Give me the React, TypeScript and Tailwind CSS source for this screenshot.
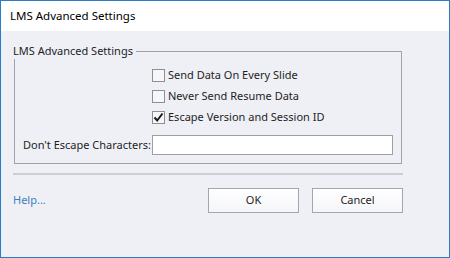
import React from 'react';

const font = "font-['Noto_Sans','Liberation_Sans',sans-serif]";

const CheckBox: React.FC<{ label: string; checked?: boolean }> = ({ label, checked }) => (
  <label className="flex items-center h-[21px] pl-[137px] select-none">
    <span className="w-[13px] h-[13px] border border-[#8e8f96] bg-[#f7f7f9] flex items-center justify-center">
      {checked && (
        <svg width="11" height="11" viewBox="0 0 11 11">
          <path d="M1.5 5.5 L4.2 8.5 L9.5 1.5" fill="none" stroke="#1a1a1a" strokeWidth="2" />
        </svg>
      )}
    </span>
    <span className="ml-[3px] text-[11px] text-[#1e1e1e]">{label}</span>
  </label>
);

const Button: React.FC<{ children: React.ReactNode }> = ({ children }) => (
  <button className="w-[91px] h-[25px] border border-[#a4a5ad] bg-gradient-to-b from-white to-[#f4f5f8] text-[11px] text-[#1e1e1e]">
    {children}
  </button>
);

export default function App() {
  return (
    <div className={`w-[450px] h-[258px] border border-[#2b7cc4] flex flex-col ${font}`}>
      {/* barra de título */}
      <div className="h-[30px] bg-white flex items-center pl-[9px] text-[11.5px] text-black">
        LMS Advanced Settings
      </div>

      <div className="flex-1 bg-[#eef0f6] pl-[12px] pt-[13px]">
        <div className="w-[390px]">
          {/* grupo */}
          <div className="relative mx-px mt-[7px] border border-[#a2a3aa] pt-[13px] pb-[8px]">
            <span className="absolute -left-[2px] -top-[9px] bg-[#eef0f6] pr-[3px] text-[11px] leading-[16px] text-[#1e1e1e]">
              LMS Advanced Settings
            </span>
            <CheckBox label="Send Data On Every Slide" />
            <CheckBox label="Never Send Resume Data" />
            <CheckBox label="Escape Version and Session ID" checked />
            <div className="flex items-center mt-[7px]">
              <span className="pl-[8px] text-[11px] text-[#1e1e1e]">Don't Escape Characters:</span>
              <input className="ml-auto mr-[8px] w-[241px] h-[20px] border border-[#9d9ea6] bg-white outline-none px-1 text-[11px]" />
            </div>
          </div>

          <div className="mt-[9px] h-[2px] bg-[#cdcfd5]" />

          <div className="mt-[13px] flex items-center">
            <a className="text-[11px] text-[#3e7fc0] cursor-pointer">Help...</a>
            <div className="ml-auto flex gap-[13px]">
              <Button>OK</Button>
              <Button>Cancel</Button>
            </div>
          </div>
        </div>
      </div>
    </div>
  );
}
